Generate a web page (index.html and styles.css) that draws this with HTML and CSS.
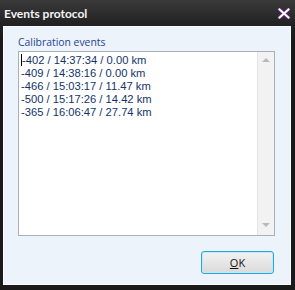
FILE: index.html
```html
<!DOCTYPE html>
<html lang="en">
<head>
    <meta charset="UTF-8">
    <meta name="viewport" content="width=device-width, initial-scale=1.0">
    <title>Events protocol</title>
    <link rel="stylesheet" href="styles.css">
</head>
<body>

    <div class="window">
        <!-- Title bar -->
        <div class="titlebar">
            <span class="title">Events protocol</span>
            <button class="close" title="Close">
                <svg width="12" height="11" viewBox="0 0 12 11">
                    <path d="M1.5 1.5 L10.5 9.5 M10.5 1.5 L1.5 9.5" stroke="#6a2a7a" stroke-width="3.8" stroke-linecap="square"/>
                    <path d="M1.5 1.5 L10.5 9.5 M10.5 1.5 L1.5 9.5" stroke="#ffffff" stroke-width="2" stroke-linecap="square"/>
                </svg>
            </button>
        </div>

        <div class="dialog">
            <div class="label">Calibration events</div>

            <div class="listbox">
                <div class="lines">
                    <div class="line"><span class="caret"></span>-402 / 14:37:34 / 0.00 km</div>
                    <div class="line">-409 / 14:38:16 / 0.00 km</div>
                    <div class="line">-466 / 15:03:17 / 11.47 km</div>
                    <div class="line">-500 / 15:17:26 / 14.42 km</div>
                    <div class="line">-365 / 16:06:47 / 27.74 km</div>
                </div>
                <div class="scrollbar">
                    <span class="arrow up"></span>
                    <span class="arrow down"></span>
                </div>
            </div>

            <div class="actions">
                <button class="ok"><u>O</u>K</button>
            </div>
        </div>
    </div>

</body>
</html>
```

FILE: styles.css
```css
/* Global */
body {
    margin: 0;
    background-color: #1c1c1c;
    font-family: "Open Sans", "Noto Sans", Arial, sans-serif;
}

/* Window frame */
.window {
    width: 295px;
    height: 290px;
    display: flex;
    flex-direction: column;
    background: linear-gradient(#2e2e2e, #1a1a1a 40px, #1a1a1a);
    box-sizing: border-box;
}

.titlebar {
    height: 26px;
    display: flex;
    align-items: center;
    justify-content: space-between;
    padding: 0 5px 0 4px;
    background: linear-gradient(#3a3a3a, #202020);
}

.title {
    color: #f4f4f4;
    font-family: Lato, "Open Sans", sans-serif;
    font-size: 12px;
    font-weight: 700;
    padding-top: 1px;
}

.close {
    border: none;
    background: none;
    padding: 0;
    width: 12px;
    height: 11px;
    display: flex;
    cursor: pointer;
}

/* Dialog body */
.dialog {
    flex: 1;
    margin: 0 4px 5px 3px;
    background-color: #edf3fb;
    border: 1px solid #f8fbff;
    display: flex;
    flex-direction: column;
    padding: 8px 15px 0 14px;
}

.label {
    color: #1f4494;
    font-size: 10.4px;
    height: 16px;
}

.listbox {
    height: 183px;
    display: flex;
    background-color: #fff;
    border: 1px solid #a9b1b8;
}

.lines {
    flex: 1;
    padding: 2px 0 0 2px;
    font-family: "Liberation Sans", Arial, sans-serif;
    font-size: 11.2px;
    color: #13336b;
}

.line {
    height: 13px;
    line-height: 13px;
    white-space: nowrap;
}

.caret {
    display: inline-block;
    width: 1px;
    height: 12px;
    background-color: #000;
    vertical-align: -2px;
}

.scrollbar {
    width: 16px;
    background-color: #f2f2f2;
    border-left: 1px solid #e4e4e4;
    display: flex;
    flex-direction: column;
    justify-content: space-between;
    align-items: center;
    padding: 6px 0 8px;
}

.arrow {
    width: 0;
    height: 0;
    border-left: 4px solid transparent;
    border-right: 4px solid transparent;
}

.arrow.up {
    border-bottom: 4px solid #b9b9b9;
}

.arrow.down {
    border-top: 4px solid #b9b9b9;
}

.actions {
    display: flex;
    justify-content: flex-end;
    padding-top: 15px;
    padding-right: 1px;
}

.ok {
    width: 73px;
    height: 23px;
    font-family: inherit;
    font-size: 11px;
    color: #111;
    border: 1px solid #2fa5d6;
    border-radius: 3px;
    background: linear-gradient(#f3f3f3, #e6e6e6 50%, #dadada);
    box-shadow: inset 0 0 0 1px #bfeafb;
    padding: 0;
    cursor: pointer;
}
```
